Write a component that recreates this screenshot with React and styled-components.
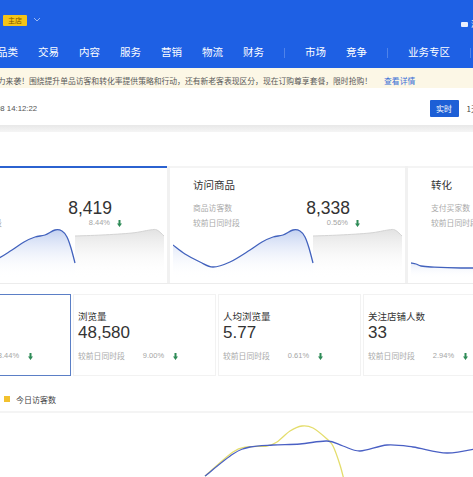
import React, { useId } from 'react';
import styled, { createGlobalStyle } from 'styled-components';

const GlobalStyle = createGlobalStyle`
  html, body {
    margin: 0;
    padding: 0;
    background: #fff;
    overflow: hidden;
  }
  body {
    font-family: "Noto Sans CJK SC", "Liberation Sans", sans-serif;
    color: #333;
  }
  #root {
    width: 473px;
    height: 477px;
    overflow: hidden;
  }
`;

const NUM_FONT = '"Liberation Sans", Arial, sans-serif';

// catmull-rom -> cubic bezier, for the little trend lines
const smooth = (pts) =>
  pts.reduce((d, p, i, a) => {
    if (i === 0) return `M${p[0]},${p[1]}`;
    const p0 = a[i - 2] || a[i - 1];
    const p1 = a[i - 1];
    const p3 = a[i + 1] || p;
    const c1 = [p1[0] + (p[0] - p0[0]) / 6, p1[1] + (p[1] - p0[1]) / 6];
    const c2 = [p[0] - (p3[0] - p1[0]) / 6, p[1] - (p3[1] - p1[1]) / 6];
    return `${d} C${c1[0]},${c1[1]} ${c2[0]},${c2[1]} ${p[0]},${p[1]}`;
  }, '');

/* ---------- header ---------- */

const Header = styled.header`
  background: #1e60e4;
  height: 68px;
  display: flex;
  flex-direction: column;
`;

const TopBar = styled.div`
  height: 37px;
  box-sizing: border-box;
  padding: 15px 0 0 3px;
  display: flex;
  align-items: flex-start;
`;

const StoreBadge = styled.span`
  width: 24px;
  height: 11px;
  background: #f4c417;
  color: #7a5400;
  font-size: 7px;
  line-height: 11px;
  text-align: center;
  border-radius: 1px;
`;

const Chevron = styled.svg`
  margin: 2px 0 0 6px;
`;

const TopRight = styled.div`
  margin-left: auto;
  margin-right: -14px;
  margin-top: 5px;
  display: flex;
  align-items: center;
  gap: 3px;
  color: #fff;
  font-size: 8px;
  line-height: 8px;
`;

const MsgIcon = styled.span`
  width: 7px;
  height: 5px;
  border-radius: 1px;
  background: rgba(255, 255, 255, 0.9);
`;

const Nav = styled.nav`
  height: 31px;
  margin-left: -3px;
  display: flex;
  align-items: center;
  gap: 20px;
  white-space: nowrap;
`;

const NavItem = styled.span`
  color: #fff;
  font-size: 10.5px;
  line-height: 1;
  flex: none;
`;

const NavDivider = styled.span`
  width: 1px;
  height: 10px;
  background: rgba(255, 255, 255, 0.22);
  flex: none;
`;

/* ---------- notice + time bar ---------- */

const Notice = styled.div`
  height: 20px;
  box-sizing: border-box;
  padding-top: 4px;
  background: #fcf7e6;
  display: flex;
  align-items: center;
  white-space: nowrap;
  overflow: hidden;
  font-size: 7.8px;
  color: #5a5a5a;
`;

const NoticeText = styled.span`
  margin-left: -10px;
  flex: none;
`;

const NoticeLink = styled.span`
  margin-left: 12px;
  color: #3b6fd6;
  flex: none;
`;

const TimeBar = styled.div`
  height: 37px;
  box-sizing: border-box;
  padding-top: 4px;
  display: flex;
  align-items: center;
  white-space: nowrap;
`;

const UpdateTime = styled.span`
  margin-left: -4px;
  font-family: ${NUM_FONT};
  font-size: 7.8px;
  color: #555;
`;

const RangeButton = styled.span`
  margin-left: auto;
  width: 29px;
  height: 17px;
  background: ${(p) => (p.active ? '#1d5fd6' : 'transparent')};
  color: ${(p) => (p.active ? '#fff' : '#444')};
  font-size: 8px;
  line-height: 17px;
  text-align: center;
  border-radius: 1px;
`;

const RangeText = styled.span`
  margin-left: 8px;
  margin-right: -6px;
  font-size: 8px;
  color: #444;
`;

const Shade = styled.div`
  height: 7px;
  background: linear-gradient(#e8e8e8, #f5f5f5);
`;

const Spacer = styled.div`
  height: ${(p) => p.h}px;
`;

/* ---------- overview cards ---------- */

const CardRow = styled.div`
  margin-left: -68px;
  display: flex;
  gap: 3px;
  background: #f1f1f1;
  border-bottom: 1px solid #ececec;
`;

const Card = styled.div`
  flex: none;
  width: 235px;
  height: 117px;
  box-sizing: border-box;
  background: #fff;
  border-top: 2px solid ${(p) => (p.active ? '#2b62d0' : '#f4f4f4')};
  display: flex;
  flex-direction: column;
`;

const CardHead = styled.div`
  display: grid;
  grid-template-columns: 1fr auto;
  grid-template-rows: 20px 20px 10px;
  padding: 10px 45px 0 23px;
`;

const CardTitle = styled.div`
  grid-column: 1 / -1;
  font-size: 10.5px;
  line-height: 14px;
  color: #333;
`;

const SubLabel = styled.div`
  font-size: 7.8px;
  line-height: ${(p) => p.lh}px;
  color: #aaa;
  white-space: nowrap;
`;

const BigValue = styled.div`
  justify-self: end;
  margin-right: 10px;
  font-family: ${NUM_FONT};
  font-size: 17.5px;
  line-height: 20px;
  color: #333;
`;

const Change = styled.div`
  justify-self: end;
  display: flex;
  align-items: center;
  gap: ${(p) => p.gap}px;
  font-family: ${NUM_FONT};
  font-size: 7.5px;
  line-height: 10px;
  color: #a5a5a5;
`;

const Spark = styled.svg`
  display: block;
  margin: 0 3px;
`;

/* ---------- index cards ---------- */

const IndexRow = styled.div`
  margin-top: 10px;
  margin-left: -72px;
  display: flex;
  gap: 2px;
`;

const IndexCard = styled.div`
  flex: none;
  width: 143px;
  height: 82px;
  box-sizing: border-box;
  padding: 14px 0 0 4px;
  border: 1px solid ${(p) => (p.active ? '#5b7fc6' : '#f2f2f2')};
  background: #fff;
`;

const IndexTitle = styled.div`
  font-size: 9.5px;
  line-height: 14px;
  color: #333;
`;

const IndexValue = styled.div`
  font-family: ${NUM_FONT};
  font-size: 17px;
  line-height: 20px;
  color: #333;
`;

const CompareRow = styled.div`
  margin-top: 7px;
  display: flex;
  align-items: center;
  line-height: 12px;
  white-space: nowrap;
`;

const Percent = styled.span`
  margin: 0 9px 0 18px;
  font-family: ${NUM_FONT};
  font-size: 7.5px;
  color: #a5a5a5;
`;

/* ---------- trend chart ---------- */

const Legend = styled.div`
  margin: 17px 0 0 4px;
  height: 12px;
  display: flex;
  align-items: center;
  gap: 6px;
  font-size: 8px;
  color: #444;
`;

const LegendDot = styled.span`
  width: 6px;
  height: 6px;
  background: ${(p) => p.color};
`;

const TrendSvg = styled.svg`
  display: block;
  margin-top: 4px;
`;

const DownArrow = () => (
  <svg width="5" height="7" viewBox="0 0 5 7">
    <path d="M1.5 0h2v3.5H5L2.5 7 0 3.5h1.5z" fill="#2e8b57" />
  </svg>
);

const BLUE_PTS = [
  [0, 17], [12, 26], [27, 34], [40, 39], [57, 34], [77, 22], [89, 14], [100, 9],
  [110, 7], [120, 2], [127, 3], [132, 9], [136, 20], [140, 35],
];
const GREY_PTS = [[140, 8], [167, 7], [197, 5], [215, 2], [222, 2], [229, 8]];
const FLAT_PTS = [[0, 35], [5, 36], [10, 38], [20, 39], [50, 40], [120, 40], [229, 40]];

const Sparkline = ({ flat }) => {
  const id = useId().replace(/:/g, '');
  const blue = flat ? FLAT_PTS : BLUE_PTS;
  const blueEnd = blue[blue.length - 1][0];
  return (
    <Spark width="229" height="50" viewBox="0 0 229 50">
      <defs>
        <linearGradient id={`b${id}`} x1="0" y1="0" x2="0" y2="1">
          <stop offset="0" stopColor="#c3d1f1" />
          <stop offset="1" stopColor="#fff" stopOpacity="0" />
        </linearGradient>
        <linearGradient id={`g${id}`} x1="0" y1="0" x2="0" y2="1">
          <stop offset="0" stopColor="#e2e2e2" />
          <stop offset="1" stopColor="#fff" stopOpacity="0" />
        </linearGradient>
      </defs>
      {!flat && (
        <>
          <path d={`${smooth(GREY_PTS)} L229,50 L140,50 Z`} fill={`url(#g${id})`} />
          <path d={smooth(GREY_PTS)} fill="none" stroke="#d4d4d4" strokeWidth="1" />
        </>
      )}
      <path d={`${smooth(blue)} L${blueEnd},50 L0,50 Z`} fill={`url(#b${id})`} opacity={flat ? 0.4 : 1} />
      <path d={smooth(blue)} fill="none" stroke="#4262bd" strokeWidth="1.3" />
    </Spark>
  );
};

const OVERVIEW = [
  { title: '访客数', label: '店铺访客数', value: '8,419', change: '8.44%', active: true },
  { title: '访问商品', label: '商品访客数', value: '8,338', change: '0.56%' },
  { title: '转化', label: '支付买家数', value: '126', change: '1.56%', flat: true },
];

const INDEXES = [
  { title: '访客数', value: '8,419', change: '8.44%', active: true },
  { title: '浏览量', value: '48,580', change: '9.00%' },
  { title: '人均浏览量', value: '5.77', change: '0.61%' },
  { title: '关注店铺人数', value: '33', change: '2.94%' },
];

const NAV = ['品类', '交易', '内容', '服务', '营销', '物流', '财务', '|', '市场', '竞争', '|', '业务专区', '|'];

const YELLOW_LINE = [
  [205, 67], [233, 43], [247, 38], [267, 37], [277, 33], [290, 22], [302, 17],
  [313, 19], [327, 30], [333, 37], [340, 56], [345, 75],
];
const BLUE_LINE = [
  [205, 67], [233, 45], [250, 38], [273, 36], [300, 35], [327, 32], [343, 37],
  [360, 42], [387, 36], [413, 38], [447, 44], [480, 39],
];

export default function App() {
  return (
    <>
      <GlobalStyle />
      <Header>
        <TopBar>
          <StoreBadge>主店</StoreBadge>
          <Chevron width="8" height="5" viewBox="0 0 8 5">
            <path d="M1 1l3 3 3-3" fill="none" stroke="rgba(255,255,255,0.55)" strokeWidth="1" />
          </Chevron>
          <TopRight>
            <MsgIcon />
            <span>消息</span>
          </TopRight>
        </TopBar>
        <Nav>
          {NAV.map((n, i) => (n === '|' ? <NavDivider key={i} /> : <NavItem key={i}>{n}</NavItem>))}
        </Nav>
      </Header>

      <Notice>
        <NoticeText>
          能力来袭！围绕提升单品访客和转化率提供策略和行动，还有新老客表现区分，现在订购尊享套餐，限时抢购！
        </NoticeText>
        <NoticeLink>查看详情</NoticeLink>
      </Notice>

      <TimeBar>
        <UpdateTime>08 14:12:22</UpdateTime>
        <RangeButton active>实时</RangeButton>
        <RangeText>1天</RangeText>
      </TimeBar>
      <Shade />
      <Spacer h={34} />

      <CardRow>
        {OVERVIEW.map((c) => (
          <Card key={c.title} active={c.active}>
            <CardHead>
              <CardTitle>{c.title}</CardTitle>
              <SubLabel lh={20}>{c.label}</SubLabel>
              <BigValue>{c.value}</BigValue>
              <SubLabel lh={10}>较前日同时段</SubLabel>
              <Change gap={7}>
                {c.change}
                <DownArrow />
              </Change>
            </CardHead>
            <Sparkline flat={c.flat} />
          </Card>
        ))}
      </CardRow>

      <IndexRow>
        {INDEXES.map((c) => (
          <IndexCard key={c.title} active={c.active}>
            <IndexTitle>{c.title}</IndexTitle>
            <IndexValue>{c.value}</IndexValue>
            <CompareRow>
              <SubLabel lh={12}>较前日同时段</SubLabel>
              <Percent>{c.change}</Percent>
              <DownArrow />
            </CompareRow>
          </IndexCard>
        ))}
      </IndexRow>

      <Legend>
        <LegendDot color="#f2c12e" />
        今日访客数
      </Legend>
      <TrendSvg width="473" height="70" viewBox="0 0 473 70">
        <line x1="0" y1="3" x2="473" y2="3" stroke="#f4f4f4" strokeWidth="2" />
        <path d={smooth(YELLOW_LINE)} fill="none" stroke="#e4dd6c" strokeWidth="1.3" />
        <path d={smooth(BLUE_LINE)} fill="none" stroke="#4a60c4" strokeWidth="1.3" />
      </TrendSvg>
    </>
  );
}
